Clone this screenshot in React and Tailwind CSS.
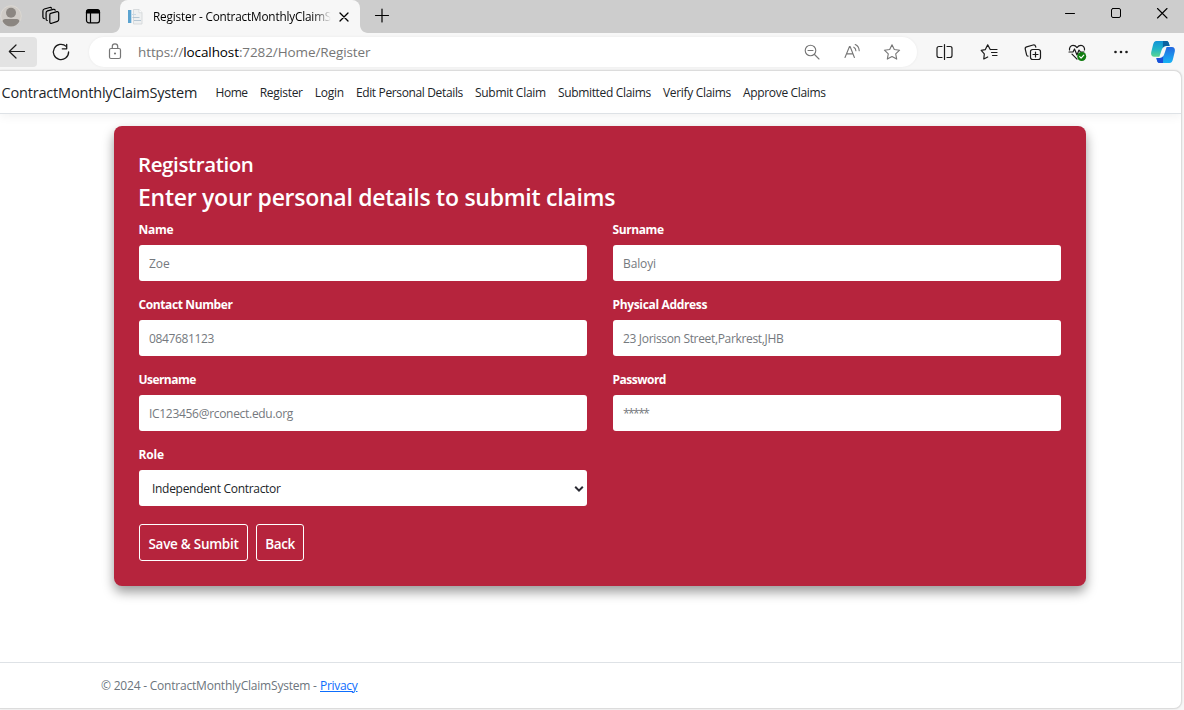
const line = {
  fill: "none",
  stroke: "currentColor",
  strokeWidth: 1.2,
  strokeLinecap: "round",
  strokeLinejoin: "round",
};

function ToolIcon({ className = "w-11", children }) {
  return (
    <svg viewBox="-22 -15 44 30" className={`h-[30px] shrink-0 ${className}`} {...line}>
      {children}
    </svg>
  );
}

function PillIcon({ children }) {
  return (
    <svg viewBox="-20 -15 40 30" className="h-[30px] w-10 shrink-0" {...line} strokeWidth="1.100">
      {children}
    </svg>
  );
}

function TitleBar() {
  return (
    <div className="flex h-[33px] shrink-0 bg-[#cdcdcd]">
      <svg viewBox="0 0 22 33" className="h-[33px] w-[22px]">
        <circle cx="11" cy="16" r="10.3" fill="#cfcbc6" stroke="#dedbd4" strokeWidth="0.8" />
        <circle cx="11" cy="12.8" r="5" fill="#8b8681" />
        <path d="M2.6 21.6c0-1.6 1-2.5 2.6-2.5h11.6c1.6 0 2.6.9 2.6 2.5-1.600 3-4.800 5-8.400 5s-6.800-2-8.400-5z" fill="#8b8681" />
      </svg>
      <svg viewBox="0 0 18 33" className="ml-5 h-[33px] w-[18px]" {...line}>
        <path d="M8.700 13.300 15 11.700c.9-.2 1.700.3 1.700 1.300v6.600c0 .9-.4 1.500-1.300 1.800l-5.600 1.900c-1.100.4-2-.1-2-1.300v-7c0-.9.2-1.500.9-1.700z" />
        <path d="M5.300 20.500c-.9-.1-1.200-.6-1.200-1.500v-6.200c0-1 .5-1.600 1.400-1.900l5.800-1.600c1-.2 1.600.1 1.900.9" />
        <path d="M2.300 18.600C1.300 18.400.9 17.900.9 17v-6.100c0-1 .5-1.600 1.400-1.900l5.400-1.500c.9-.2 1.500 0 1.900.7" />
      </svg>
      <svg viewBox="0 0 16 33" className="ml-[25px] h-[33px] w-4" {...line}>
        <rect x="1.500" y="10" width="13" height="12.800" rx="2.300" />
        <path d="M1.500 13v-1c0-1.500.8-2.500 2.500-2.500h8c1.700 0 2.500 1 2.500 2.500v1z" fill="currentColor" />
        <path d="M5.500 13v9.500" />
      </svg>
      <div className="relative ml-[19px] flex w-60 items-center rounded-t-lg bg-[#f7f7f7] pl-[7px]">
        <svg viewBox="0 0 8 8" className="absolute bottom-0 -left-2 size-2">
          <path d="M8 0v8H0c4.400 0 8-3.600 8-8z" fill="#f7f7f7" />
        </svg>
        <svg viewBox="0 0 8 8" className="absolute -right-2 bottom-0 size-2">
          <path d="M0 0v8h8C3.600 8 0 4.400 0 0z" fill="#f7f7f7" />
        </svg>
        <svg viewBox="0 0 17 18" className="h-[18px] w-[17px] shrink-0">
          <rect x="1" y="2" width="3" height="13" fill="#5ba3d0" />
          <rect x="4" y="2" width="1" height="13" fill="#c5dcec" />
          <path d="M6.500 1.500h5.500l3 3.200v11.300H6.500z" fill="#eef0f1" stroke="#d0d4d7" strokeWidth="0.8" />
          <path d="M12 1.500v3.200h3" fill="#fff" stroke="#d0d4d7" strokeWidth="0.7" />
          <path d="M5.500 9.500h7M7 12.500h7" stroke="#b5c6d3" strokeWidth="1" />
          <path d="M5 6.500h4" stroke="#c7d8e5" strokeWidth="1" />
        </svg>
        <div className="mb-[2px] ml-[9px] w-[178px] overflow-hidden bg-linear-to-r from-black from-88% to-[#f7f7f7] bg-clip-text text-[11.750px] leading-5 tracking-[-0.170px] whitespace-nowrap text-transparent">
          Register - ContractMonthlyClaimS
        </div>
        <svg viewBox="0 0 10 10" className="ml-[8px] size-[10px] shrink-0" {...line} strokeWidth="1.300">
          <path d="M1 1l8 8M9 1 1 9" />
        </svg>
      </div>
      <svg viewBox="0 0 16 33" className="ml-[14px] h-[33px] w-4" {...line}>
        <path d="M1.500 15.500h13M8 9v13" />
      </svg>
      <div className="ml-auto flex text-black">
        <svg viewBox="0 0 46 33" className="h-[33px] w-[46px]" {...line} strokeWidth="1">
          <path d="M18.500 13.500h9" />
        </svg>
        <svg viewBox="0 0 46 33" className="h-[33px] w-[46px]" {...line} strokeWidth="1">
          <rect x="18.500" y="8.500" width="9" height="9" rx="1.500" />
        </svg>
        <svg viewBox="0 0 45 33" className="h-[33px] w-[45px]" {...line} strokeWidth="1.100">
          <path d="M18.500 8.500l9.500 9.500M28 8.500 18.500 18" />
        </svg>
      </div>
    </div>
  );
}

function Toolbar() {
  return (
    <div className="flex h-[37px] shrink-0 items-center pt-1 pb-[3px] text-[#1b1b1b]">
      <div className="flex h-[30px] w-[37px] items-center rounded-r-[4px] bg-[#e3e3e3]">
        <svg viewBox="0 0 37 30" className="h-[30px] w-[37px]" {...line}>
          <path d="M24.500 14.500H9.500M16 8l-6.700 6.500L16 21" />
        </svg>
      </div>
      <svg viewBox="-24 -15 48 30" className="h-[30px] w-12" {...line} strokeWidth="1.300">
        <path d="M5.200-5.600A7.600 7.600 0 1 0 7.600 0" />
        <path d="M5.700-7.500v4.300H1.300" />
      </svg>
      <div className="ml-1 flex h-[30px] w-[828px] items-center rounded-full bg-white pr-[5px] text-[#767676] shadow-[0_0_3px_rgba(0,0,0,0.06)]">
        <svg viewBox="0 0 14 30" className="ml-[19px] h-[30px] w-[14px]" {...line}>
          <rect x="1.500" y="11.500" width="11" height="10" rx="1.500" />
          <path d="M4.300 11.500V9.500a2.700 2.700 0 0 1 5.400 0v2" />
          <circle cx="7" cy="16.500" r="0.500" fill="currentColor" />
        </svg>
        <div className="ml-4 text-[13.500px] leading-5 tracking-[-0.100px] whitespace-nowrap text-[#767676]">
          https://<span className="text-black">localhost</span>:7282/Home/Register
        </div>
        <div className="ml-auto flex">
          <PillIcon>
            <circle cx="-1.500" cy="-1.500" r="5.300" />
            <path d="M2.500 2.500 7 7M-4-1.500h5" />
          </PillIcon>
          <PillIcon>
            <path d="M-7 5.500-2.500-5.500h.6L2.400 5.500M-5.400 1.900H1" />
            <path d="M1.800-4.800c1.300.7 2 2 2.100 3.600M3.200-7.400c2.500 1 3.900 3.200 4 6.200" />
          </PillIcon>
          <PillIcon>
            <path d="M0-7.300l2.300 4.800 5.300.7-3.900 3.700 1 5.200L0 4.600l-4.700 2.500 1-5.200-3.900-3.700 5.300-.7z" />
          </PillIcon>
        </div>
      </div>
      <div className="ml-[6px] flex">
        <ToolIcon>
          <path d="M-.5-7.500v15M-3-5.500h-3c-1.300 0-2 .7-2 2v7c0 1.300.7 2 2 2h3M2-5.500h3c1.300 0 2 .7 2 2v7c0 1.300-.7 2-2 2H2" />
        </ToolIcon>
        <ToolIcon>
          <path d="M1.200-2.500-1.300-7.200-3.800-2.300l-4 .7L-4.700 1.900-5.200 7l3.900-2M1.500-2.500h6.500M2.500.5h5.500M3.500 3.500H8" />
        </ToolIcon>
        <ToolIcon>
          <rect x="-2.500" y="-2.500" width="10" height="10" rx="2.200" />
          <path d="M2.500 0v5M0 2.500h5" />
          <path d="M-5 4.200c-.8-.1-1.200-.6-1.400-1.400L-7.700-2.700c-.3-1.200.2-2.100 1.300-2.400l6.500-1.900c1.200-.3 2.200.2 2.500 1.300l.2.800" />
        </ToolIcon>
        <ToolIcon>
          <path d="M-7.500-2c-.4-2.500 1.200-4.600 3.500-4.600 1.700 0 3 .8 4 2.200 1-1.400 2.300-2.200 4-2.200 2.300 0 3.900 2.100 3.500 4.600M-5 2.200 0 7.200" />
          <path d="M-8 0h4l1.500-3L0 3l2-5L3.500 0H7" />
          <circle cx="4.700" cy="4.500" r="4.500" fill="#107c10" stroke="none" />
          <path d="M2.700 4.700l1.400 1.400 2.700-2.900" stroke="white" />
        </ToolIcon>
        <ToolIcon>
          <g fill="currentColor" stroke="none">
            <circle cx="-5.500" cy="0" r="1.300" />
            <circle cx="0" cy="0" r="1.300" />
            <circle cx="5.500" cy="0" r="1.300" />
          </g>
        </ToolIcon>
        <svg viewBox="-13 -13 26 26" className="ml-[7px] size-[26px] self-center">
          <defs>
            <linearGradient id="teal" x1="0" y1="0" x2="0" y2="1">
              <stop offset="0" stopColor="#1192d8" />
              <stop offset="0.500" stopColor="#20b4c8" />
              <stop offset="1" stopColor="#5ad690" />
            </linearGradient>
            <linearGradient id="blue" x1="0" y1="0" x2="0" y2="1">
              <stop offset="0" stopColor="#2468e0" />
              <stop offset="1" stopColor="#18b4f4" />
            </linearGradient>
          </defs>
          <path d="M-6.500-11H3.500C5.500-11 6-9 6.600-6H3C0-6-1-3-2 0l-1.600 4.800h-5.200c-2.400 0-3.600-1.800-3-4.500L-10-7c.7-2.700 1.500-4 3.500-4z" fill="url(#teal)" />
          <path d="M0-11h3.500C5.500-11 6-9 6.600-6H3c-1.500 0-2.500.7-3.200 2z" fill="#0b62a0" />
          <path d="M6.500 11h-10C-5.500 11-6 9-6.600 6H-3C0 6 1 3 2 0l1.600-5h5.200c2.400 0 3.600 1.800 3 4.500L10 7c-.7 2.700-1.500 4-3.500 4z" fill="url(#blue)" />
          <path d="M0 11h-3.500C-5.500 11-6 9-6.600 6H-3c1.500 0 2.500-.7 3.200-2z" fill="#1c4fd8" />
        </svg>
      </div>
    </div>
  );
}

const links = [
  ["Home", "tracking-[-0.450px]"],
  ["Register", "tracking-[-0.280px]"],
  ["Login", "tracking-[-0.240px]"],
  ["Edit Personal Details", "tracking-[-0.360px]"],
  ["Submit Claim", "tracking-[-0.270px]"],
  ["Submitted Claims", "tracking-[-0.330px]"],
  ["Verify Claims", "tracking-[-0.310px]"],
  ["Approve Claims", "tracking-[-0.330px]"],
];

function NavBar() {
  return (
    <header className="flex h-[43px] shrink-0 items-center border-b border-[#dee2e6] pt-[2px] pl-[1.500px] shadow-[0_3px_9px_rgba(0,0,0,0.05)]">
      <a className="w-[202px] text-[14.500px] tracking-[-0.180px] whitespace-nowrap text-[#212529]">
        ContractMonthlyClaimSystem
      </a>
      <nav className="ml-3 flex gap-3">
        {links.map(([text, tracking]) => (
          <a key={text} className={`whitespace-nowrap text-[#212529] ${tracking}`}>
            {text}
          </a>
        ))}
      </nav>
    </header>
  );
}

const fields = [
  ["Name", "Zoe", "tracking-[-0.300px]", "tracking-normal"],
  ["Surname", "Baloyi", "tracking-[-0.400px]", "tracking-[-0.120px]"],
  ["Contact Number", "0847681123", "tracking-[-0.390px]", "tracking-[-0.350px]"],
  ["Physical Address", "23 Jorisson Street,Parkrest,JHB", "tracking-[-0.340px]", "tracking-[-0.330px]"],
  ["Username", "IC123456@rconect.edu.org", "tracking-[-0.550px]", "tracking-[-0.300px]"],
  ["Password", "*****", "tracking-[-0.500px]", "tracking-[-1.550px]"],
];

function Label({ className = "tracking-[-0.150px]", children }) {
  return <label className={`mb-[6px] -ml-[0.500px] block leading-[18px] font-bold ${className}`}>{children}</label>;
}

function RegistrationCard() {
  return (
    <main className="mt-3 ml-[114px] h-[460px] w-[972px] rounded-lg bg-[#b6243d] px-[25px] pt-[25px] text-white shadow-[0_6px_12px_rgba(0,0,0,0.4)]">
      <h3 className="-ml-px h-[31px] text-[20.500px] leading-[27px] font-semibold tracking-[-0.390px]">Registration</h3>
      <h2 className="-ml-px h-[39px] text-[23px] leading-[31px] font-semibold tracking-[-0.270px]">
        Enter your personal details to submit claims
      </h2>
      <div className="grid grid-cols-[448px_448px] gap-x-[26px] gap-y-[15px]">
        {fields.map(([label, placeholder, labelTracking, textTracking]) => (
          <div key={label}>
            <Label className={labelTracking}>{label}</Label>
            <input
              placeholder={placeholder}
              className={`block h-9 w-full rounded-[3px] bg-white px-[10px] text-xs placeholder:text-[#75797e] ${textTracking}`}
            />
          </div>
        ))}
        <div>
          <Label>Role</Label>
          <div className="flex h-9 items-center justify-between rounded-[3px] bg-white pt-px pr-[3px] pl-[13px] text-[#212529]">
            <span className="tracking-[-0.300px]">Independent Contractor</span>
            <svg viewBox="0 0 10 8" className="h-2 w-[10px]" fill="none" stroke="#2b2b33" strokeWidth="2">
              <path d="M1.200 1.800 5 5.600l3.800-3.800" />
            </svg>
          </div>
        </div>
      </div>
      <div className="mt-[18px] flex gap-2 text-[13.500px] font-semibold">
        <button className="h-[37px] w-[109px] rounded-[3px] border border-white pt-[2px] tracking-[-0.270px] whitespace-nowrap">
          Save &amp; Sumbit
        </button>
        <button className="h-[37px] w-12 rounded-[3px] border border-white pt-[2px] tracking-[-0.400px]">Back</button>
      </div>
    </main>
  );
}

export default function App() {
  return (
    <div className="flex h-[710px] w-[1184px] flex-col overflow-hidden bg-[#f7f7f7] font-['Open_Sans','Noto_Sans',sans-serif] text-xs text-black">
      <TitleBar />
      <Toolbar />
      <div className="flex h-[639px] w-[1182px] flex-col overflow-hidden rounded-r-lg border-t border-r border-b border-[#dcdcdc] bg-white shadow-[0_0_2px_rgba(0,0,0,0.12)]">
        <NavBar />
        <RegistrationCard />
        <footer className="mt-auto flex h-[46px] items-center border-t border-[#dee2e6] pl-[101px] text-[#6c757d]">
          <span className="w-[219px] tracking-[-0.210px] whitespace-pre">© 2024 - ContractMonthlyClaimSystem - </span>
          <a className="tracking-[-0.300px] text-[#0d6efd] underline">Privacy</a>
        </footer>
      </div>
    </div>
  );
}
